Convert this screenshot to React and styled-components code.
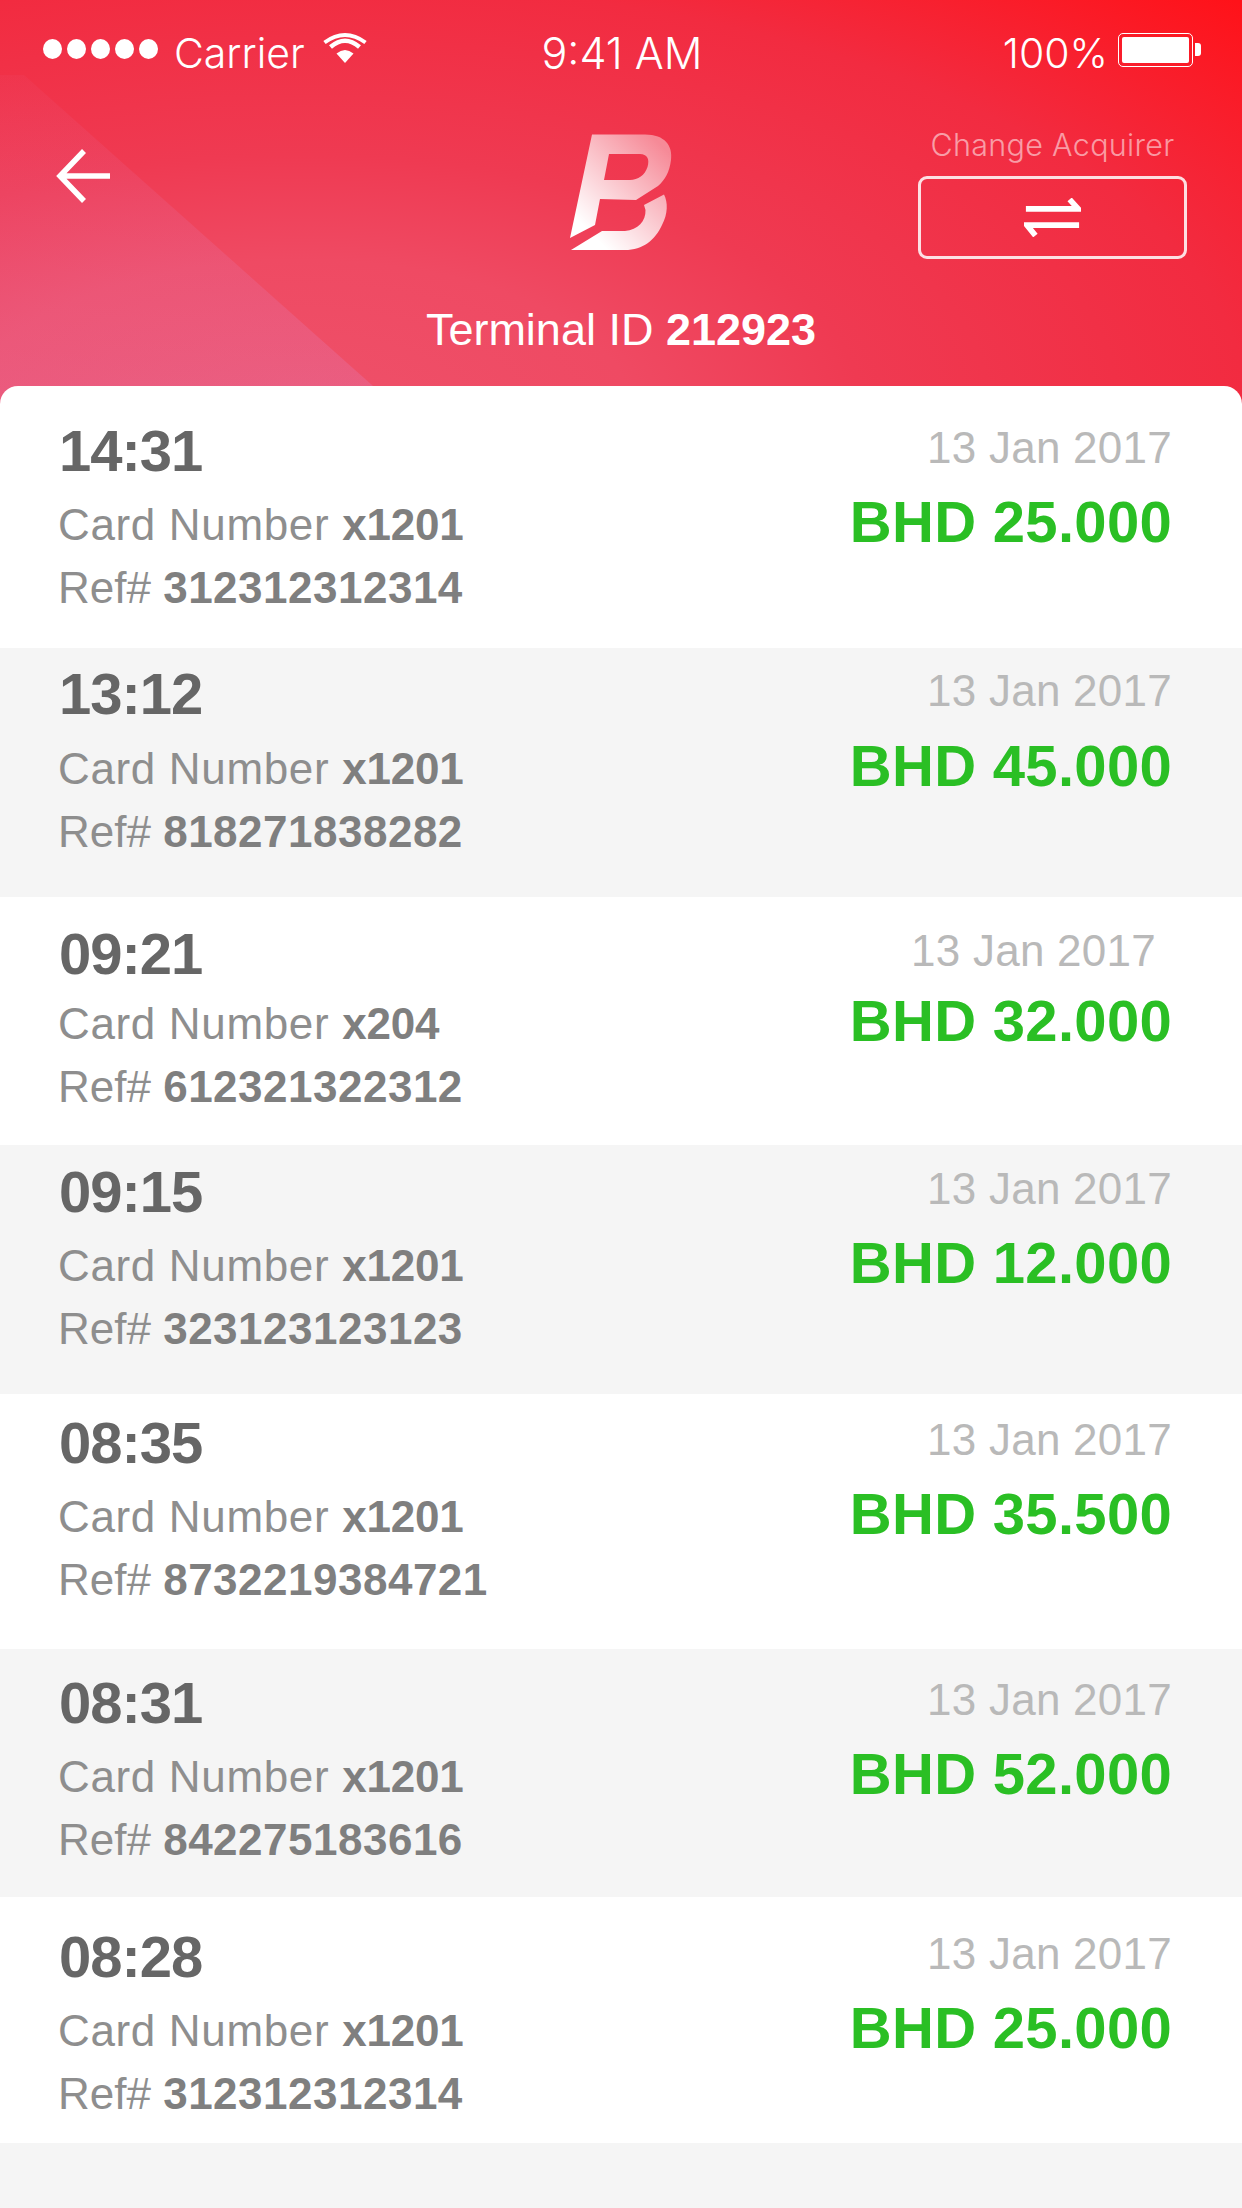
import styled, { createGlobalStyle } from 'styled-components';

const GlobalStyle = createGlobalStyle`
  html, body {
    margin: 0;
    padding: 0;
    background: #f5f5f5;
  }
`;

const rows = [
  { time: '14:31', card: 'x1201', ref: '312312312314', amount: 'BHD 25.000', height: 262, top: 32, gap: 9 },
  { time: '13:12', card: 'x1201', ref: '818271838282', amount: 'BHD 45.000', height: 249, top: 13, gap: 10 },
  { time: '09:21', card: 'x204', ref: '612321322312', amount: 'BHD 32.000', height: 248, top: 24, gap: 5 },
  { time: '09:15', card: 'x1201', ref: '323123123123', amount: 'BHD 12.000', height: 249, top: 14, gap: 9 },
  { time: '08:35', card: 'x1201', ref: '8732219384721', amount: 'BHD 35.500', height: 255, top: 16, gap: 9 },
  { time: '08:31', card: 'x1201', ref: '842275183616', amount: 'BHD 52.000', height: 248, top: 21, gap: 9 },
  { time: '08:28', card: 'x1201', ref: '312312312314', amount: 'BHD 25.000', height: 246, top: 27, gap: 9 },
];

function Wifi() {
  return (
    <WifiIcon viewBox="0 0 44 31">
      <path d="M22 31 L13.5 21.5 Q22 14.5 30.5 21.5 Z" fill="#fff" />
      <path d="M7.5 15 Q22 2.5 36.5 15" fill="none" stroke="#fff" strokeWidth="4.5" />
      <path d="M1.5 9 Q22 -6 42.5 9" fill="none" stroke="#fff" strokeWidth="4" transform="translate(0 1.5)" />
    </WifiIcon>
  );
}

function Logo() {
  return (
    <LogoIcon viewBox="25 20 110 125">
      <defs>
        <linearGradient id="logoFill" gradientUnits="userSpaceOnUse" x1="42" y1="128" x2="128" y2="42">
          <stop offset="0.08" stopColor="#fff" />
          <stop offset="1" stopColor="#fff" stopOpacity="0.42" />
        </linearGradient>
      </defs>
      <path
        fill="url(#logoFill)"
        fillRule="evenodd"
        d="M52 24.5 L105 24.5 C125 24.5 133 36 131 50 C129.500 62 125 70 118 76 L96 90 L60 89 L55 115 L30 128 Z M69 44 L64 70 L90 70 C98 70 105 65 107.500 57 C110 49 107 44 100 44 Z"
      />
      <path
        fill="url(#logoFill)"
        d="M31 140 L62 121 L85 121 C98 120 106 111 105.500 100 L104 95 L124 84.500 C128 92 128 104 122 115 C115 130 103 140 85 140 Z"
      />
    </LogoIcon>
  );
}

export default function App() {
  return (
    <Page>
      <GlobalStyle />
      <Header>
        <StatusBar>
          <StatusLeft>
            <Dots>
              {[0, 1, 2, 3, 4].map((i) => <Dot key={i} />)}
            </Dots>
            <StatusText>Carrier</StatusText>
            <Wifi />
          </StatusLeft>
          <Clock>9:41 AM</Clock>
          <StatusRight>
            <StatusText>100%</StatusText>
            <Battery>
              <BatteryFill />
            </Battery>
            <BatteryNub />
          </StatusRight>
        </StatusBar>
        <NavRow>
          <BackIcon viewBox="0 0 58 56">
            <path d="M56 28 H6 M30 3 L6 28 L30 53" fill="none" stroke="#fff" strokeWidth="5.500" />
          </BackIcon>
          <Logo />
          <Acquirer>
            <AcquirerLabel>Change Acquirer</AcquirerLabel>
            <AcquirerButton>
              <SwapIcon viewBox="0 0 60 40">
                <path d="M2 11 H57 L48 1" fill="none" stroke="#fff" strokeWidth="6" />
                <path d="M58 28 H3 L12 39" fill="none" stroke="#fff" strokeWidth="6" />
              </SwapIcon>
            </AcquirerButton>
          </Acquirer>
        </NavRow>
        <Terminal>Terminal ID <b>212923</b></Terminal>
      </Header>
      <List>
        {rows.map((row, i) => (
          <Row key={i} $alt={i % 2 === 1} $height={row.height} $top={row.top}>
            <Details>
              <Time $gap={row.gap}>{row.time}</Time>
              <CardLine>Card Number <b>{row.card}</b></CardLine>
              <RefLine>Ref# <b>{row.ref}</b></RefLine>
            </Details>
            <Totals>
              <DateText $shifted={i === 2}>13 Jan 2017</DateText>
              <Amount $gap={row.gap}>{row.amount}</Amount>
            </Totals>
          </Row>
        ))}
      </List>
    </Page>
  );
}

const Page = styled.div`
  width: 1242px;
  height: 2208px;
  overflow: hidden;
  background: #f5f5f5;
  font-family: "Liberation Sans", Arial, sans-serif;
`;

const Header = styled.header`
  position: relative;
  height: 410px;
  box-sizing: border-box;
  color: #fff;
  background: radial-gradient(
    ellipse 1100px 500px at 300px 410px,
    #ee5069 0%,
    #ef4a63 30%,
    #ef3a52 51%,
    #f22b40 86%,
    #ff1219 118%
  );

  &::before {
    content: "";
    position: absolute;
    left: 0;
    top: 75px;
    width: 400px;
    height: 335px;
    background: linear-gradient(to bottom, rgba(225, 130, 190, 0.05), rgba(225, 130, 190, 0.3));
    clip-path: polygon(0 0, 24px 0, 100% 100%, 0 100%);
  }
`;

const StatusBar = styled.div`
  position: relative;
  display: grid;
  grid-template-columns: 1fr auto 1fr;
  align-items: center;
  height: 76px;
  padding: 30px 41px 0 43px;
  box-sizing: border-box;
`;

const StatusLeft = styled.div`
  display: flex;
  align-items: center;
`;

const StatusRight = styled.div`
  display: flex;
  align-items: center;
  justify-content: flex-end;
`;

const StatusText = styled.span`
  font-family: Inter, "Liberation Sans", sans-serif;
  font-size: 41px;
  font-weight: 300;
  line-height: 46px;
`;

const Clock = styled(StatusText)`
  font-size: 43px;
`;

const Dots = styled.div`
  display: flex;
  gap: 5px;
  margin: -8px 16px 0 0;
`;

const Dot = styled.span`
  width: 19px;
  height: 20px;
  border-radius: 50%;
  background: #fff;
`;

const WifiIcon = styled.svg`
  width: 44px;
  height: 31px;
  margin: -11px 0 0 18px;
`;

const Battery = styled.div`
  width: 75px;
  height: 34px;
  margin: -7px 0 0 10px;
  padding: 3px;
  box-sizing: border-box;
  border: 1.5px solid #fff;
  border-radius: 5px;
`;

const BatteryFill = styled.div`
  height: 100%;
  border-radius: 2px;
  background: #fff;
`;

const BatteryNub = styled.div`
  width: 6px;
  height: 13px;
  margin: -7px 0 0 2px;
  border-radius: 0 3px 3px 0;
  background: #fff;
`;

const NavRow = styled.div`
  position: relative;
  display: grid;
  grid-template-columns: 1fr auto 1fr;
  align-items: start;
  height: 194px;
  padding: 52px 55px 0 54px;
  box-sizing: border-box;
`;

const BackIcon = styled.svg`
  width: 58px;
  height: 56px;
  margin-top: 20px;
`;

const LogoIcon = styled.svg`
  width: 110px;
  height: 125px;
  margin: 2px 0 0 -2px;
`;

const Acquirer = styled.div`
  justify-self: end;
  display: flex;
  flex-direction: column;
  align-items: center;
  margin-top: -1px;
`;

const AcquirerLabel = styled.div`
  font-family: Inter, "Liberation Sans", sans-serif;
  font-size: 30.5px;
  font-weight: 300;
  line-height: 36px;
  color: rgba(255, 255, 255, 0.55);
  letter-spacing: 0.3px;
`;

const AcquirerButton = styled.div`
  display: flex;
  align-items: center;
  justify-content: center;
  width: 269px;
  height: 83px;
  margin-top: 13px;
  box-sizing: border-box;
  border: 3px solid rgba(255, 255, 255, 0.85);
  border-radius: 9px;
`;

const SwapIcon = styled.svg`
  width: 57px;
  height: 39px;
`;

const Terminal = styled.div`
  position: relative;
  font-size: 45px;
  line-height: 50px;
  text-align: center;
  margin-top: 35px;
`;

const List = styled.main`
  position: relative;
  margin-top: -24px;
  border-radius: 18px 18px 0 0;
  overflow: hidden;
`;

const Row = styled.article`
  display: flex;
  justify-content: space-between;
  height: ${(p) => p.$height}px;
  padding: ${(p) => p.$top}px 70px 0 58px;
  box-sizing: border-box;
  background: ${(p) => (p.$alt ? '#f5f5f5' : '#fff')};
`;

const Details = styled.div`
  display: flex;
  flex-direction: column;
`;

const Time = styled.div`
  font-size: 58px;
  font-weight: 700;
  line-height: 66px;
  letter-spacing: -1px;
  color: #666;
  margin: 0 0 ${(p) => p.$gap}px 1px;
`;

const Line = styled.div`
  font-size: 44px;
  line-height: 63px;
  color: #8e8e8e;

  b {
    color: #7f7f7f;
  }
`;

const CardLine = styled(Line)`
  letter-spacing: 0.65px;

  b {
    letter-spacing: -0.2px;
  }
`;

const RefLine = styled(Line)`
  b {
    letter-spacing: 0.5px;
  }
`;

const Totals = styled.div`
  display: flex;
  flex-direction: column;
  align-items: flex-end;
`;

const DateText = styled.div`
  font-size: 44px;
  line-height: 60px;
  letter-spacing: 0.25px;
  color: #b9b9b9;
  margin-right: ${(p) => (p.$shifted ? 16 : 0)}px;
`;

const Amount = styled.div`
  font-size: 58px;
  font-weight: 700;
  line-height: 66px;
  letter-spacing: 0.3px;
  color: #2abf24;
  margin-top: ${(p) => p.$gap + 2}px;
`;
